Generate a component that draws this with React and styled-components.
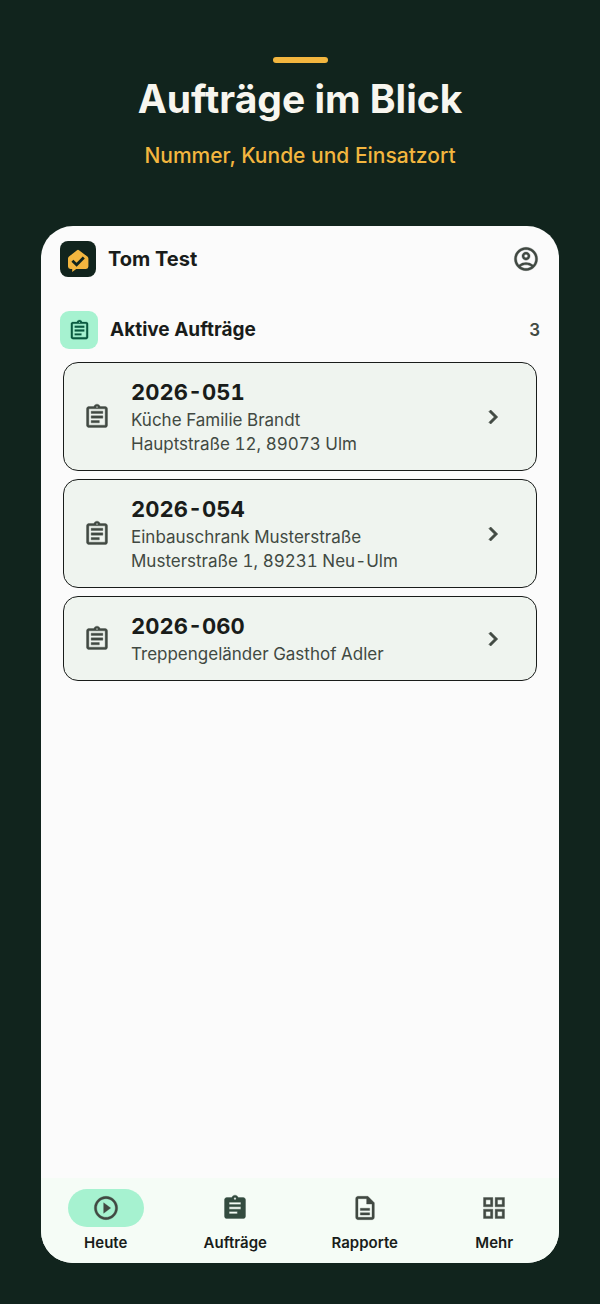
import React from 'react';
import styled, { createGlobalStyle } from 'styled-components';
import {
    MdAssignment,
    MdChevronRight,
    MdOutlineAccountCircle,
    MdOutlineAssignment,
    MdOutlineGridView,
    MdPlayCircleOutline,
} from 'react-icons/md';

const GlobalStyle = createGlobalStyle`
    * {
        box-sizing: border-box;
    }

    body {
        margin: 0;
        background: #11241d;
        font-family: Inter, "Liberation Sans", sans-serif;
        color: #191c1a;
    }

    /* the material icons carry an empty bounding path */
    svg path[fill="none"]:first-child {
        stroke: none;
    }
`;

const Page = styled.div`
    display: flex;
    flex-direction: column;
    min-height: 100vh;
    padding: 57px 41px 41px;
`;

const Hero = styled.header`
    display: flex;
    flex-direction: column;
    align-items: center;
    margin-bottom: 57px;
    text-align: center;
`;

const Accent = styled.span`
    width: 55px;
    height: 6px;
    border-radius: 3px;
    background: #f3b63f;
`;

const HeroTitle = styled.h1`
    margin: 12px 0 0;
    font-size: 39px;
    line-height: 48px;
    font-weight: 700;
    color: #f8f6ef;
`;

const HeroText = styled.p`
    margin: 20px 0 0;
    font-size: 21px;
    line-height: 26px;
    font-weight: 500;
    color: #f3b63f;
`;

const Screen = styled.main`
    display: flex;
    flex-direction: column;
    flex: 1;
    overflow: hidden;
    border-radius: 32px;
    background: #fbfbfb;
`;

const TopBar = styled.div`
    display: flex;
    align-items: center;
    gap: 12px;
    padding: 15px 19px 0;
`;

const Logo = styled.svg`
    width: 36px;
    height: 36px;
`;

const UserName = styled.h2`
    flex: 1;
    margin: 0;
    font-size: 20px;
    line-height: 28px;
    font-weight: 700;
`;

const IconButton = styled.button`
    display: flex;
    padding: 0;
    border: none;
    background: none;
    color: #414942;
    cursor: pointer;

    svg {
        stroke-width: 0.3;
    }
`;

const SectionHeader = styled.div`
    display: flex;
    align-items: center;
    gap: 12px;
    padding: 34px 19px 13px;
`;

const SectionIcon = styled.span`
    display: flex;
    align-items: center;
    justify-content: center;
    width: 38px;
    height: 38px;
    border-radius: 9px;
    background: #a6f2d0;
    color: #0b5a41;

    svg {
        stroke-width: 0.2;
    }
`;

const SectionTitle = styled.h3`
    flex: 1;
    margin: 0;
    font-size: 19px;
    line-height: 28px;
    font-weight: 700;
`;

const Count = styled.span`
    font-size: 17px;
    font-weight: 600;
    color: #414942;
`;

const OrderList = styled.ul`
    display: flex;
    flex-direction: column;
    flex: 1;
    gap: 8px;
    margin: 0;
    padding: 0 22px;
    list-style: none;
`;

const OrderCard = styled.a`
    display: flex;
    align-items: center;
    gap: 20px;
    padding: 15px 29px 14px 19px;
    border: 1px solid #191c1a;
    border-radius: 15px;
    background: #eff4ef;
    color: #414942;
    text-decoration: none;
    font-variant-numeric: tabular-nums;

    svg {
        stroke-width: 0.3;
    }

    svg:last-child {
        stroke-width: 0.6;
    }
`;

const OrderInfo = styled.div`
    flex: 1;
`;

const OrderNumber = styled.div`
    margin-bottom: 2px;
    font-size: 22px;
    line-height: 28px;
    font-weight: 700;
    color: #191c1a;
`;

const OrderLine = styled.div`
    font-size: 17px;
    line-height: 24px;
`;

const NavBar = styled.nav`
    display: flex;
    padding: 11px 0 10px;
    background: #f5fcf6;
`;

const NavItem = styled.a`
    display: flex;
    flex-direction: column;
    align-items: center;
    flex: 1;
    gap: 6px;
    color: #191c1a;
    font-size: 15px;
    line-height: 20px;
    font-weight: 600;
    text-decoration: none;
`;

const NavPill = styled.span`
    display: flex;
    align-items: center;
    justify-content: center;
    width: 76px;
    height: 38px;
    border-radius: 19px;
    background: ${({ $active }) => ($active ? '#a6f2d0' : 'transparent')};
    color: ${({ $dark }) => ($dark ? '#334b3f' : '#414942')};

    svg {
        stroke-width: 0.3;
    }
`;

const ReportIcon = ({ size }) => (
    <svg
        width={size}
        height={size}
        viewBox="0 0 24 24"
        fill="currentColor"
        stroke="currentColor"
        aria-hidden="true"
    >
        <path
            fillRule="evenodd"
            d="M6 2H14.5L20 7.5V20C20 21.1 19.1 22 18 22H6C4.9 22 4 21.1 4 20V4C4 2.9 4.9 2 6 2ZM6 4V20H18V8.6H13.4V4Z"
        />
        <path d="M8 12.2H16V14.2H8ZM8 16H16V18H8Z" />
    </svg>
);

const orders = [
    { number: '2026-051', lines: ['Küche Familie Brandt', 'Hauptstraße 12, 89073 Ulm'] },
    { number: '2026-054', lines: ['Einbauschrank Musterstraße', 'Musterstraße 1, 89231 Neu-Ulm'] },
    { number: '2026-060', lines: ['Treppengeländer Gasthof Adler'] },
];

const navItems = [
    { label: 'Heute', icon: MdPlayCircleOutline, active: true },
    { label: 'Aufträge', icon: MdAssignment, dark: true },
    { label: 'Rapporte', icon: ReportIcon },
    { label: 'Mehr', icon: MdOutlineGridView },
];

const Order = ({ number, lines }) => (
    <li>
        <OrderCard href={`#${number}`}>
            <MdOutlineAssignment size={28} />
            <OrderInfo>
                <OrderNumber>{number}</OrderNumber>
                {lines.map((line) => (
                    <OrderLine key={line}>{line}</OrderLine>
                ))}
            </OrderInfo>
            <MdChevronRight size={28} />
        </OrderCard>
    </li>
);

const App = () => {
    return (
        <>
            <GlobalStyle />
            <Page>
                <Hero>
                    <Accent />
                    <HeroTitle>Aufträge im Blick</HeroTitle>
                    <HeroText>Nummer, Kunde und Einsatzort</HeroText>
                </Hero>
                <Screen>
                    <TopBar>
                        <Logo viewBox="0 0 36 36" aria-hidden="true">
                            <rect width="36" height="36" rx="8" fill="#11241d" />
                            <path
                                d="M17 9.2Q18 8.4 19 9.2L27.4 15.6Q28.4 16.4 28.4 17.6V25.6Q28.4 28 26 28H16.2L12.2 31V28H10.4Q8 28 8 25.6V17.6Q8 16.4 9 15.6Z"
                                fill="#f3b63f"
                            />
                            <path
                                d="M12.4 19.8L16.6 23.8L23.8 16.4"
                                fill="none"
                                stroke="#11241d"
                                strokeWidth="2.8"
                            />
                        </Logo>
                        <UserName>Tom Test</UserName>
                        <IconButton type="button" aria-label="Konto">
                            <MdOutlineAccountCircle size={28} />
                        </IconButton>
                    </TopBar>
                    <SectionHeader>
                        <SectionIcon>
                            <MdOutlineAssignment size={23} />
                        </SectionIcon>
                        <SectionTitle>Aktive Aufträge</SectionTitle>
                        <Count>3</Count>
                    </SectionHeader>
                    <OrderList>
                        {orders.map((order) => (
                            <Order key={order.number} {...order} />
                        ))}
                    </OrderList>
                    <NavBar>
                        {navItems.map(({ label, icon: Icon, active, dark }) => (
                            <NavItem key={label} href={`#${label}`}>
                                <NavPill $active={active} $dark={dark}>
                                    <Icon size={28} />
                                </NavPill>
                                {label}
                            </NavItem>
                        ))}
                    </NavBar>
                </Screen>
            </Page>
        </>
    );
};

export default App;
